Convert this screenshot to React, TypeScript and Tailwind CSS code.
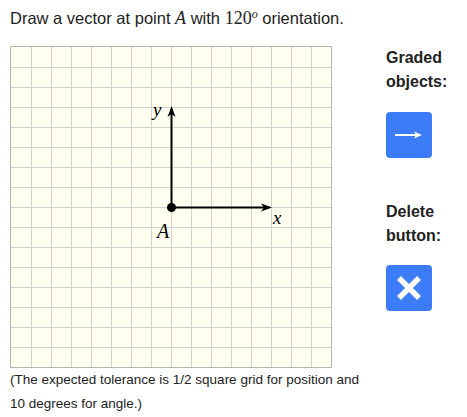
import React from "react";

const CELL = 20;
const SIZE = 320;

function Canvas() {
  const lines = [];
  for (let i = 1; i < 16; i++) {
    const p = i * CELL + 0.5;
    lines.push(<line key={"v" + i} x1={p} y1={0} x2={p} y2={SIZE} stroke="#d2d2d2" strokeWidth={1} />);
    lines.push(<line key={"h" + i} x1={0} y1={p} x2={SIZE} y2={p} stroke="#d2d2d2" strokeWidth={1} />);
  }
  const ax = 160.5;
  const ay = 160.5;
  return (
    <div className="border border-[#b4b4b4] w-[322px] h-[322px] bg-[#fffff0]">
      <svg width={SIZE} height={SIZE} className="block">
        {lines}
        <line x1={ax} y1={ay} x2={ax} y2={62} stroke="#000" strokeWidth={2} />
        <path d="M160.5 59 L156.5 70 L160.5 67 L164.5 70 Z" fill="#000" />
        <line x1={ax} y1={ay} x2={258} y2={ay} stroke="#000" strokeWidth={2} />
        <path d="M261 160.5 L250 156.5 L253 160.5 L250 164.5 Z" fill="#000" />
        <circle cx={ax} cy={ay} r={4.5} fill="#000" />
        <text x={142} y={69} fontFamily="'Liberation Serif', serif" fontStyle="italic" fontSize={19} fill="#000">y</text>
        <text x={262} y={177} fontFamily="'Liberation Serif', serif" fontStyle="italic" fontSize={19} fill="#000">x</text>
        <text x={146} y={191} fontFamily="'Liberation Serif', serif" fontStyle="italic" fontSize={20} fill="#000">A</text>
      </svg>
    </div>
  );
}

export default function App() {
  return (
    <div className="w-[467px] h-[417px] bg-white text-[#222] font-['Liberation_Sans',Arial,sans-serif] px-[10px] pt-[6px]">
      <p className="text-[16.5px] leading-[24px]">
        Draw a vector at point{" "}
        <span className="font-['Liberation_Serif',serif] italic text-[18px]">A</span> with{" "}
        <span className="font-['Liberation_Serif',serif] text-[18px]">
          120<sup className="italic text-[12px] -top-[0.5em]">o</sup>
        </span>{" "}
        orientation.
      </p>
      <div className="flex mt-[16px]">
        <Canvas />
        <div className="ml-[54px] font-bold text-[16px] leading-[24px]">
          <div>
            Graded
            <br />
            objects:
          </div>
          <button className="mt-[18px] w-[46px] h-[46px] rounded-[4px] bg-[#3c7cf8] flex items-center justify-center">
            <svg width="28" height="8" viewBox="0 0 28 8">
              <line x1="0" y1="4" x2="22" y2="4" stroke="#fff" strokeWidth="2" />
              <path d="M27 4 L19 0.5 L21 4 L19 7.5 Z" fill="#fff" />
            </svg>
          </button>
          <div className="mt-[42px]">
            Delete
            <br />
            button:
          </div>
          <button className="mt-[17px] w-[46px] h-[46px] rounded-[4px] bg-[#3c7cf8] flex items-center justify-center">
            <svg width="28" height="28" viewBox="0 0 28 28">
              <path d="M4 4 L24 24 M24 4 L4 24" stroke="#fff" strokeWidth="5.5" strokeLinecap="butt" />
            </svg>
          </button>
        </div>
      </div>
      <p className="text-[13.5px] leading-[24px]">
        (The expected tolerance is 1/2 square grid for position and
        <br />
        10 degrees for angle.)
      </p>
    </div>
  );
}
